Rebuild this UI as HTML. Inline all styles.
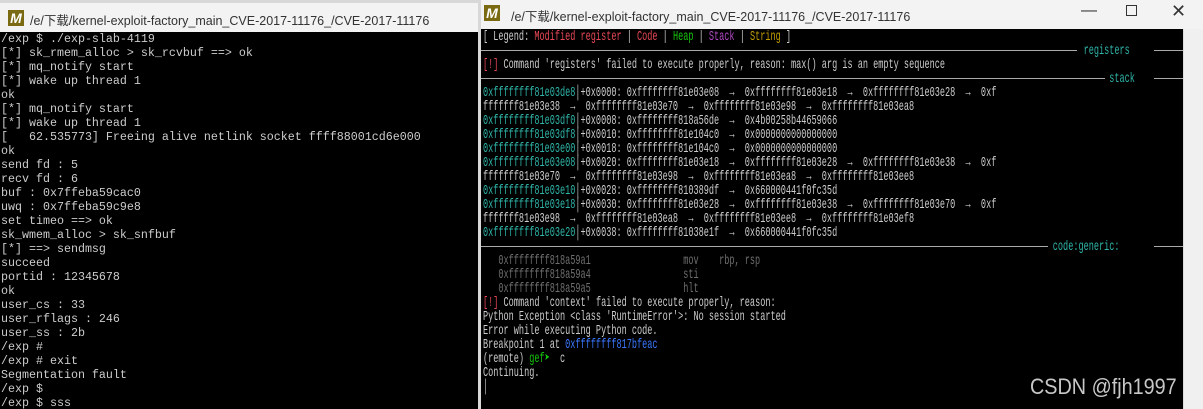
<!DOCTYPE html>
<html><head><meta charset="utf-8"><style>
*{margin:0;padding:0;box-sizing:border-box}
body{width:1203px;height:409px;overflow:hidden;background:#d8d8d8;position:relative;font-family:"Liberation Mono",monospace}
.tb{position:absolute;background:#f3f3f3;font-family:"Liberation Sans","Noto Sans CJK SC",sans-serif;font-size:12.5px;color:#333}
.ic{position:absolute;width:16px;height:16px;background:#7a6a12;color:#fff;font:bold 14px/16px "Liberation Sans",sans-serif;text-align:center;font-style:italic}
.term{position:absolute;background:#000;overflow:hidden}
pre{font-family:"Liberation Mono",monospace;color:#cccccc;white-space:pre}
#L pre{font-size:11.67px;line-height:14px;position:absolute;left:1px;top:0}
#R .in{position:absolute;left:2px;top:1px;width:1200px;transform:scale(0.611,1);transform-origin:0 0}
#R pre{font-size:14px;line-height:14px}
.c{color:#2fb5a8}.r{color:#e74856}.g{color:#16c60c}.p{color:#b148c6}.y{color:#c19c00}.d{color:#6e6e6e}.b{color:#3b78ff}
.rule{position:absolute;height:1px;background:#aaa}
</style></head><body>
<div class="tb" style="left:0;top:3px;width:478px;height:29px"><div class="ic" style="left:8px;top:7px">M</div><span style="position:absolute;left:30px;top:7px">/e/下载/kernel-exploit-factory_main_CVE-2017-11176_/CVE-2017-11176</span></div>
<div class="term" id="L" style="left:0;top:32px;width:478px;height:377px"><pre>/exp $ ./exp-slab-4119
[*] sk_rmem_alloc > sk_rcvbuf ==> ok
[*] mq_notify start
[*] wake up thread 1
ok
[*] mq_notify start
[*] wake up thread 1
[   62.535773] Freeing alive netlink socket ffff88001cd6e000
ok
send fd : 5
recv fd : 6
buf : 0x7ffeba59cac0
uwq : 0x7ffeba59c9e8
set timeo ==> ok
sk_wmem_alloc > sk_snfbuf
[*] ==> sendmsg
succeed
portid : 12345678
ok
user_cs : 33
user_rflags : 246
user_ss : 2b
/exp #
/exp # exit
Segmentation fault
/exp $
/exp $ sss</pre></div>
<div class="tb" style="left:481px;top:0;width:722px;height:29px"><div class="ic" style="left:3px;top:5px">M</div><span style="position:absolute;left:30px;top:6px">/e/下载/kernel-exploit-factory_main_CVE-2017-11176_/CVE-2017-11176</span>
<span style="position:absolute;left:600px;top:2px;font-size:16px">—</span><span style="position:absolute;left:645px;top:5px;width:11px;height:11px;border:1px solid #333"></span><span style="position:absolute;left:690px;top:1px;font-size:18px">✕</span></div>
<div class="term" id="R" style="left:481px;top:29px;width:702px;height:380px">
<div class="rule" style="left:0;top:21px;width:596px"></div><div class="rule" style="left:673px;top:21px;width:30px"></div>
<div class="rule" style="left:0;top:49px;width:624px"></div><div class="rule" style="left:673px;top:49px;width:30px"></div>
<div class="rule" style="left:0;top:217px;width:567px"></div><div class="rule" style="left:673px;top:217px;width:30px"></div>
<div class="in"><pre>[ Legend: <span class="r">Modified register</span> | <span class="r">Code</span> | <span class="g">Heap</span> | <span class="p">Stack</span> | <span class="y">String</span> ]
                                                                                                                     <span class="c">registers</span>
<span class="r">[!]</span> Command 'registers' failed to execute properly, reason: max() arg is an empty sequence
                                                                                                                          <span class="c">stack</span>
<span class="c">0xffffffff81e03de8</span>│+0x0000: 0xffffffff81e03e08  →  0xffffffff81e03e18  →  0xffffffff81e03e28  →  0xf
fffffff81e03e38  →  0xffffffff81e03e70  →  0xffffffff81e03e98  →  0xffffffff81e03ea8
<span class="c">0xffffffff81e03df0</span>│+0x0008: 0xffffffff818a56de  →  0x4b00258b44659066
<span class="c">0xffffffff81e03df8</span>│+0x0010: 0xffffffff81e104c0  →  0x0000000000000000
<span class="c">0xffffffff81e03e00</span>│+0x0018: 0xffffffff81e104c0  →  0x0000000000000000
<span class="c">0xffffffff81e03e08</span>│+0x0020: 0xffffffff81e03e18  →  0xffffffff81e03e28  →  0xffffffff81e03e38  →  0xf
fffffff81e03e70  →  0xffffffff81e03e98  →  0xffffffff81e03ea8  →  0xffffffff81e03ee8
<span class="c">0xffffffff81e03e10</span>│+0x0028: 0xffffffff810389df  →  0x660000441f0fc35d
<span class="c">0xffffffff81e03e18</span>│+0x0030: 0xffffffff81e03e28  →  0xffffffff81e03e38  →  0xffffffff81e03e70  →  0xf
fffffff81e03e98  →  0xffffffff81e03ea8  →  0xffffffff81e03ee8  →  0xffffffff81e03ef8
<span class="c">0xffffffff81e03e20</span>│+0x0038: 0xffffffff81038e1f  →  0x660000441f0fc35d
                                                                                                               <span class="c">code:generic:</span>
<span class="d">   0xffffffff818a59a1                  mov    rbp, rsp
   0xffffffff818a59a4                  sti
   0xffffffff818a59a5                  hlt</span>
<span class="r">[!]</span> Command 'context' failed to execute properly, reason:
Python Exception &lt;class 'RuntimeError'&gt;: No session started
Error while executing Python code.
Breakpoint 1 at <span class="b">0xffffffff817bfeac</span>
(remote) <span class="g">gef➤</span>  c
Continuing.
│</pre></div></div>
<div style="position:absolute;left:1183px;top:29px;width:20px;height:380px;background:#f0f0f0;border-left:1px solid #ddd"></div>
<div style="position:absolute;left:1030px;top:374px;font:22px 'Liberation Sans',sans-serif;color:#c8c8c8;transform:scaleX(0.9);transform-origin:0 0">CSDN @fjh1997</div>
</body></html>
